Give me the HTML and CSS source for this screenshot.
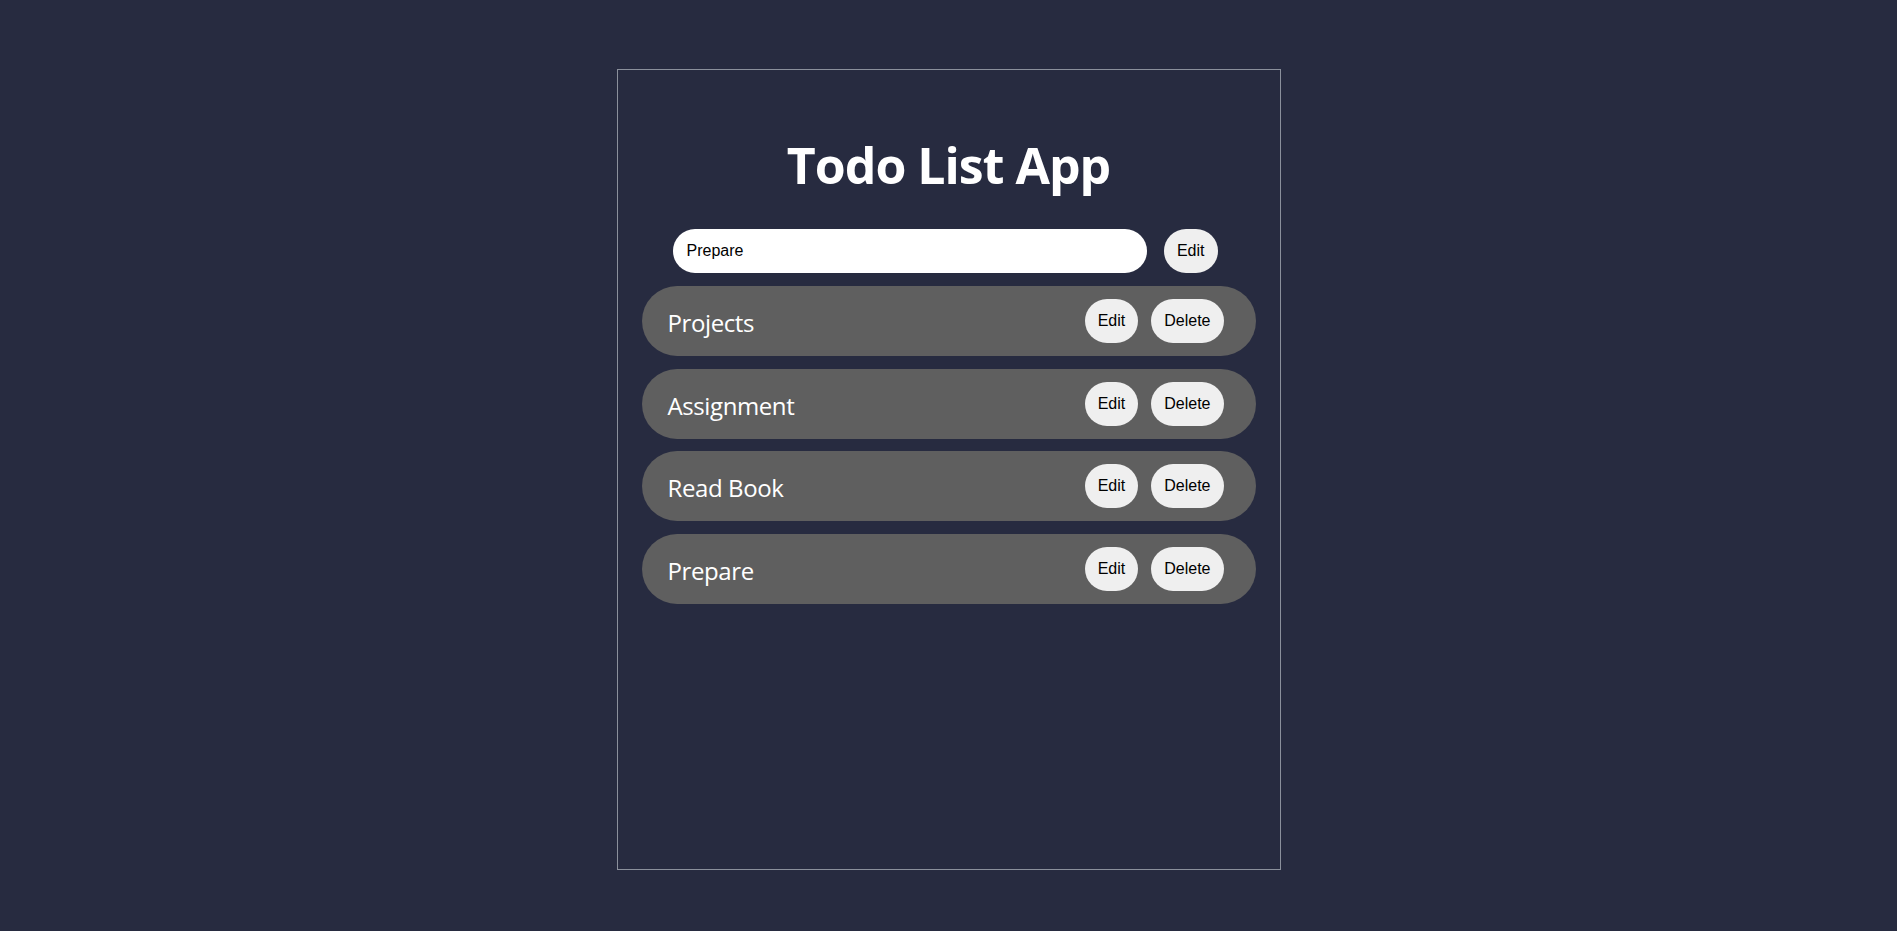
FILE: index.html
```html
<!DOCTYPE html>
<html lang="en">
<head>
<meta charset="utf-8">
<title>Todo List App</title>
<link rel="stylesheet" href="styles.css">
</head>
<body>
<div class="app">
  <h1 class="title">Todo List App</h1>
  <form class="form">
    <input class="input" type="text" value="Prepare">
    <button class="btn" type="button">Edit</button>
  </form>
  <ul class="list">
    <li class="item"><span class="item-text">Projects</span><span class="actions"><button class="btn" type="button">Edit</button><button class="btn" type="button">Delete</button></span></li>
    <li class="item"><span class="item-text">Assignment</span><span class="actions"><button class="btn" type="button">Edit</button><button class="btn" type="button">Delete</button></span></li>
    <li class="item"><span class="item-text">Read Book</span><span class="actions"><button class="btn" type="button">Edit</button><button class="btn" type="button">Delete</button></span></li>
    <li class="item"><span class="item-text">Prepare</span><span class="actions"><button class="btn" type="button">Edit</button><button class="btn" type="button">Delete</button></span></li>
  </ul>
</div>
</body>
</html>
```
FILE: styles.css
```css
html, body {
  margin: 0;
  padding: 0;
  background: #272b40;
}
body {
  padding-top: 69px;
  font-family: "Open Sans", "Liberation Sans", sans-serif;
}
.app {
  box-sizing: border-box;
  width: 664px;
  height: 801px;
  margin: 0 auto;
  border: 1px solid #8b909c;
  display: flex;
  flex-direction: column;
}
.title {
  margin: 30px 0 0;
  height: 129px;
  display: flex;
  align-items: center;
  justify-content: center;
  color: #ffffff;
  font-size: 50px;
  font-weight: 700;
  letter-spacing: -1px;
}
.form {
  display: flex;
  gap: 17px;
  padding: 0 62px 0 55px;
  margin: 0 0 13px;
}
.input {
  flex: 1;
  box-sizing: border-box;
  height: 44px;
  border: none;
  border-radius: 22px;
  background: #ffffff;
  padding: 0 14px;
  font-family: "Liberation Sans", Arial, sans-serif;
  font-size: 16px;
  color: #000;
  outline: none;
}
.btn {
  box-sizing: border-box;
  height: 44px;
  padding: 0 13px;
  border: none;
  border-radius: 22px;
  background: #efefef;
  color: #000;
  font-family: "Liberation Sans", Arial, sans-serif;
  font-size: 16px;
}
.list {
  list-style: none;
  margin: 0 24px;
  padding: 0;
  display: flex;
  flex-direction: column;
  gap: 12.7px;
}
.item {
  height: 70px;
  border-radius: 35px;
  background: #5f5f5f;
  display: flex;
  align-items: center;
  justify-content: space-between;
  padding: 0 32px 0 26px;
}
.item-text {
  color: #ffffff;
  font-size: 24px;
  letter-spacing: -0.4px;
  padding-top: 3px;
}
.actions {
  display: flex;
  gap: 13px;
}
```
